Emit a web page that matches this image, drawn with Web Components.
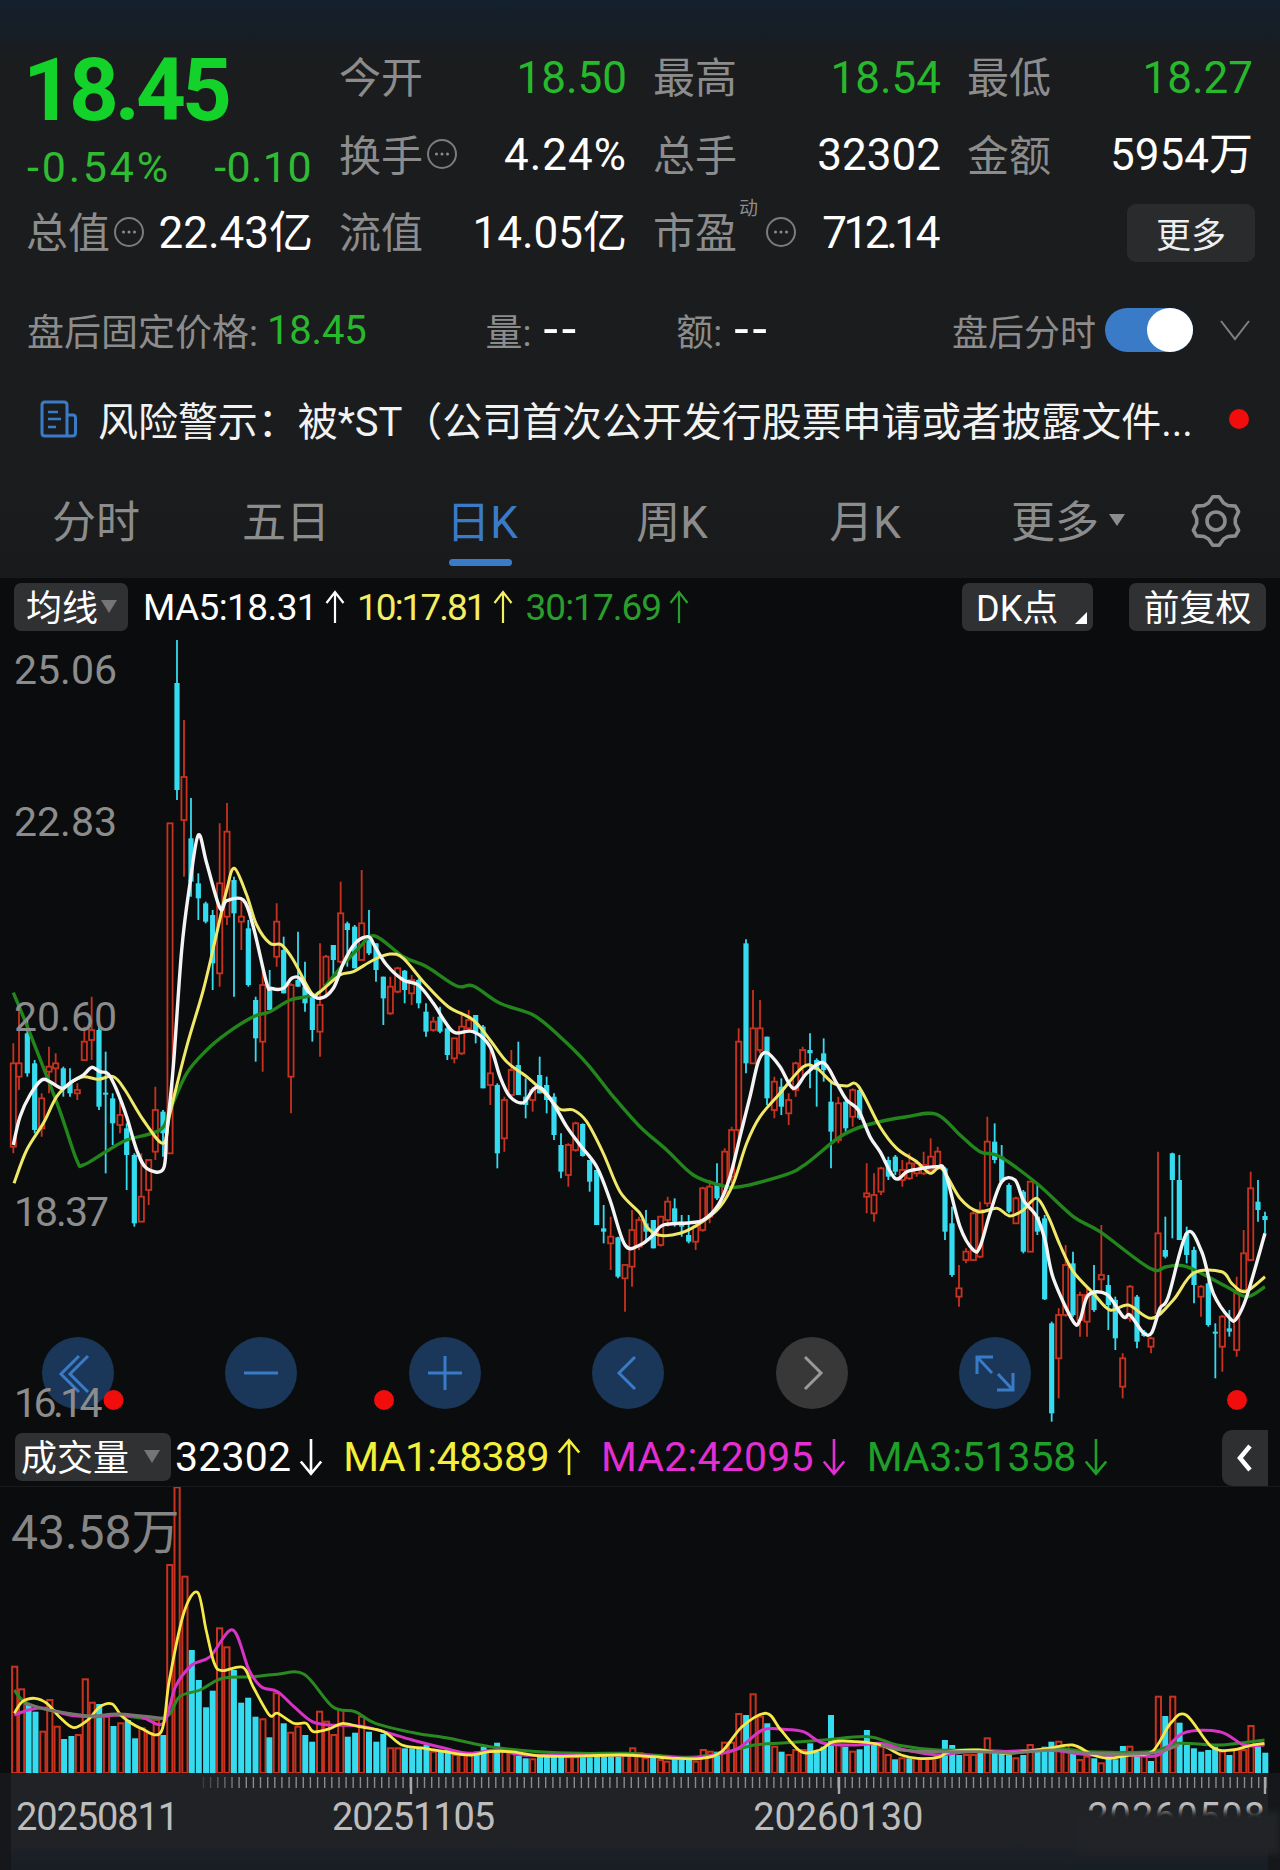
<!DOCTYPE html>
<html lang="zh">
<head>
<meta charset="utf-8">
<title>K线</title>
<style>
  html, body { margin: 0; padding: 0; background: #0b0c0d; }
  body {
    width: 1280px;
    height: 1870px;
    overflow: hidden;
    display: flex;
    flex-direction: column;
    font-family: Roboto, "Noto Sans CJK SC", sans-serif;
    color: #fff;
  }
</style>
</head>
<body>
  <quote-panel>
    <price-block slot="price" price="18.45" pct="-0.54%" diff="-0.10"></price-block>
    <stat-cell label="今开" value="18.50" tone="up"></stat-cell>
    <stat-cell label="最高" value="18.54" tone="up"></stat-cell>
    <stat-cell label="最低" value="18.27" tone="up"></stat-cell>
    <stat-cell label="换手" value="4.24%" info="true" spacing="1px"></stat-cell>
    <stat-cell label="总手" value="32302"></stat-cell>
    <stat-cell label="金额" value="5954万"></stat-cell>
    <stat-cell label="总值" value="22.43亿" info="true"></stat-cell>
    <stat-cell label="流值" value="14.05亿"></stat-cell>
    <stat-cell label="市盈" sup="动" value="712.14" info="true" spacing="-3.4px" nudge="2px"></stat-cell>
    <more-button>更多</more-button>
  </quote-panel>
  <after-hours></after-hours>
  <risk-notice>风险警示：被*ST（公司首次公开发行股票申请或者披露文件...</risk-notice>
  <period-tabs></period-tabs>
  <chart-toolbar height="58">
    <chart-chip mark="down" style="width:114px">均线</chart-chip>
    <ma-legend color="#ffffff" dir="up" spacing="-0.6px" style="margin-left:15px">MA5:18.31</ma-legend>
    <ma-legend color="#f3ee63" dir="up" spacing="-2px" style="margin-left:12px">10:17.81</ma-legend>
    <ma-legend color="#2a9e2c" dir="up" spacing="-1px" style="margin-left:13px">30:17.69</ma-legend>
    <chart-chip mark="corner" style="width:131px;margin-left:auto">DK点</chart-chip>
    <chart-chip style="width:137px;margin-left:36px;margin-right:14px">前复权</chart-chip>
  </chart-toolbar>
  <kline-chart></kline-chart>
  <chart-toolbar height="58" line="true">
    <chart-chip mark="down" wide="true" style="width:156px;margin-left:1px">成交量</chart-chip>
    <ma-legend color="#ffffff" dir="down" size="41" spacing="0.2px" big="true" style="margin-left:4px">32302</ma-legend>
    <ma-legend color="#f4ef3a" dir="up" size="41" spacing="-0.6px" big="true" style="margin-left:20px">MA1:48389</ma-legend>
    <ma-legend color="#e22fd2" dir="down" size="41" spacing="0.2px" big="true" style="margin-left:20px">MA2:42095</ma-legend>
    <ma-legend color="#1f9e2a" dir="down" size="41" spacing="-0.2px" big="true" style="margin-left:21px">MA3:51358</ma-legend>
    <back-tab style="margin-left:auto;margin-right:12px"></back-tab>
  </chart-toolbar>
  <volume-chart></volume-chart>
  <date-axis></date-axis>

<script>
const COLORS = { up: '#27b92c', blue: '#3a7bc8', gray: '#8c8c8c', red: '#c8321f', cyan: '#35dcef' };

class QuotePanel extends HTMLElement {
  constructor() {
    super();
    this.attachShadow({ mode: 'open' });
    this.shadowRoot.innerHTML = `
      <style>
        :host {
          display: block;
          height: 283px;
          box-sizing: border-box;
          padding: 39px 28px 0 27px;
          background: linear-gradient(#13202d 0, #1b1c1e 62px);
        }
        .grid {
          display: grid;
          grid-template-columns: 284px 285px 285px 283px;
          grid-auto-rows: 77.5px;
          column-gap: 29px;
          align-items: center;
        }
        ::slotted([slot=price]) { grid-row: span 2; align-self: start; }
      </style>
      <div class="grid"><slot name="price"></slot><slot id="rest"></slot></div>`;
    // stats fill the grid through display: contents of the default slot
    this.shadowRoot.querySelector('#rest').style.display = 'contents';
  }
}

class PriceBlock extends HTMLElement {
  constructor() {
    super();
    this.attachShadow({ mode: 'open' });
    this.shadowRoot.innerHTML = `
      <style>
        :host { display: block; color: #15d12a; }
        .price { font-size: 87px; font-weight: 700; line-height: 102px; letter-spacing: -4px; color: #13d229; margin-left: -4px; }
        .row { display: flex; justify-content: space-between; line-height: 53px; font-size: 43px; color: #2fbb33; }
        .pct { letter-spacing: 2.8px; }
        .diff { letter-spacing: 0.4px; margin-right: -1px; }
      </style>
      <div class="price">${this.getAttribute('price')}</div>
      <div class="row"><span class="pct">${this.getAttribute('pct')}</span><span class="diff">${this.getAttribute('diff')}</span></div>`;
  }
}

class StatCell extends HTMLElement {
  constructor() {
    super();
    this.attachShadow({ mode: 'open' });
    const tone = this.getAttribute('tone') === 'up' ? COLORS.up : '#fff';
    const sup = this.getAttribute('sup');
    const spacing = this.getAttribute('spacing') || '0';
    const nudge = this.getAttribute('nudge') || '-2px';
    this.shadowRoot.innerHTML = `
      <style>
        :host { display: flex; align-items: center; justify-content: space-between; height: 60px; }
        .label { display: flex; align-items: center; font-size: 42px; color: ${COLORS.gray}; position: relative; margin-top: -6px; margin-left: -1px; }
        .sup { position: absolute; left: 86px; top: -6px; font-size: 19px; }
        .value { font-size: 44px; line-height: 50px; color: ${tone}; letter-spacing: ${spacing}; margin-right: ${nudge}; }
        svg { margin-top: 4px; }
        .gap { margin-left: ${sup ? 28 : 3}px; }
      </style>
      <div class="label">${this.getAttribute('label')}${sup ? `<span class="sup">${sup}</span>` : ''}
        ${this.getAttribute('info') ? `<svg class="gap" width="32" height="32" viewBox="0 0 32 32"><circle cx="16" cy="16" r="14" fill="none" stroke="#7c7c7c" stroke-width="2"/><circle cx="10.5" cy="16" r="1.5" fill="#8c8c8c"/><circle cx="16" cy="16" r="1.5" fill="#8c8c8c"/><circle cx="21.5" cy="16" r="1.5" fill="#8c8c8c"/></svg>` : ''}
      </div>
      <div class="value">${this.getAttribute('value')}</div>`;
  }
}

class MoreButton extends HTMLElement {
  constructor() {
    super();
    this.attachShadow({ mode: 'open' });
    this.shadowRoot.innerHTML = `
      <style>
        :host {
          display: flex; align-items: center; justify-content: center;
          justify-self: end; margin-right: -4px;
          width: 128px; height: 58px; border-radius: 9px;
          background: #2a2b2d; font-size: 35px; color: #eee;
        }
      </style><slot></slot>`;
  }
}

class AfterHours extends HTMLElement {
  constructor() {
    super();
    this.attachShadow({ mode: 'open' });
    this.shadowRoot.innerHTML = `
      <style>
        :host {
          display: flex; align-items: center; height: 94px; box-sizing: border-box;
          padding: 0 30px 0 27px; background: #1b1c1e; font-size: 37px; color: ${COLORS.gray};
        }
        .val { font-size: 40px; color: ${COLORS.up}; margin-left: 9px; letter-spacing: -0.2px; }
        .dash { color: #fff; font-size: 52px; line-height: 40px; margin-left: 12px; letter-spacing: 4px; }
        .track { position: relative; width: 88px; height: 44px; border-radius: 22px; background: ${COLORS.blue}; margin-left: 9px; }
        .knob { position: absolute; right: 0; top: 0; width: 46px; height: 44px; border-radius: 50%; background: #fff; }
        svg { margin-left: 27px; }
      </style>
      <span>盘后固定价格:</span><span class="val">18.45</span>
      <span style="margin-left:119px">量:</span><span class="dash">--</span>
      <span style="margin-left:96px">额:</span><span class="dash">--</span>
      <span style="margin-left:auto;font-size:36px">盘后分时</span>
      <div class="track"><div class="knob"></div></div>
      <svg width="30" height="22" viewBox="0 0 30 22"><path d="M1 2 L15 20 L29 2" fill="none" stroke="#808080" stroke-width="2"/></svg>`;
  }
}

class RiskNotice extends HTMLElement {
  constructor() {
    super();
    this.attachShadow({ mode: 'open' });
    this.shadowRoot.innerHTML = `
      <style>
        :host {
          display: flex; align-items: center; height: 84px; box-sizing: border-box;
          padding: 0 31px 0 40px; background: #1b1c1e; font-size: 40px; color: #f2f2f2;
        }
        svg { flex: none; }
        .text { margin-left: 21px; white-space: nowrap; flex: 1; letter-spacing: -0.06px; }
        .dot { width: 20px; height: 20px; border-radius: 50%; background: #f20d0d; }
      </style>
      <svg width="37" height="38" viewBox="0 0 37 38" fill="none" stroke="${COLORS.blue}" stroke-width="3">
        <path d="M27 36 H5 Q2 36 2 33 V5 Q2 2 5 2 H24 Q27 2 27 5 V36 Q27 36 27 36"/>
        <path d="M27 15 H33 Q35.5 15 35.5 18 V33 Q35.5 36 32 36 H27"/>
        <path d="M8 12 H18 M8 19 H21 M8 27 H16" stroke-width="2.5"/>
      </svg>
      <div class="text"><slot></slot></div>
      <div class="dot"></div>`;
  }
}

class PeriodTabs extends HTMLElement {
  constructor() {
    super();
    this.attachShadow({ mode: 'open' });
    const tabs = [['分时', 192], ['五日', 188], ['日K', 204, true], ['周K', 176], ['月K', 210], ['更多', 196, false, true]];
    const pts = [];
    for (let i = 0; i < 24; i++) {
      const a = (i / 24) * Math.PI * 2 - Math.PI / 2 - Math.PI / 24;
      const r = [24.5, 24.5, 19.5, 19.5][i % 4];
      pts.push((26 + r * Math.cos(a)).toFixed(1) + ',' + (27 + r * Math.sin(a)).toFixed(1));
    }
    this.shadowRoot.innerHTML = `
      <style>
        :host {
          display: grid; grid-template-columns: ${tabs.map(t => t[1] + 'px').join(' ')} auto;
          height: 117px; background: linear-gradient(#1b1c1e, #191a1c);
          font-size: 44px; color: ${COLORS.gray}; position: relative;
        }
        .tab { position: relative; display: flex; align-items: center; justify-content: center; padding-bottom: 1px; }
        .on { color: ${COLORS.blue}; }
        .on::after {
          content: ''; position: absolute; left: 69px; bottom: 12px; width: 63px; height: 7px;
          border-radius: 4px; background: ${COLORS.blue};
        }
        .tri { width: 0; height: 0; margin: 2px 0 0 10px; border: 8px solid transparent; border-top: 12px solid ${COLORS.gray}; border-bottom: 0; }
        svg { margin: 33px 0 0 24px; }
      </style>
      ${tabs.map(t => `<div class="tab${t[2] ? ' on' : ''}">${t[0]}${t[3] ? '<span class="tri"></span>' : ''}</div>`).join('')}
      <svg width="52" height="54" viewBox="0 0 52 54" fill="none" stroke="#8c8c8c" stroke-width="3.6" stroke-linejoin="round">
        <polygon points="${pts.join(' ')}"/>
        <circle cx="26" cy="27" r="9"/>
      </svg>`;
  }
}

class ChartToolbar extends HTMLElement {
  constructor() {
    super();
    this.attachShadow({ mode: 'open' });
    this.shadowRoot.innerHTML = `
      <style>
        :host {
          display: flex; align-items: center; box-sizing: border-box;
          height: ${this.getAttribute('height')}px; padding-left: 14px; background: #0b0c0d;
          ${this.getAttribute('line') ? 'height: 59px; border-bottom: 1px solid #191a1b;' : ''}
        }
      </style><slot></slot>`;
  }
}

class ChartChip extends HTMLElement {
  constructor() {
    super();
    this.attachShadow({ mode: 'open' });
    const mark = this.getAttribute('mark');
    this.shadowRoot.innerHTML = `
      <style>
        :host {
          display: flex; align-items: center; justify-content: center; position: relative; box-sizing: border-box;
          height: 48px; padding-bottom: 4px; border-radius: 7px; background: #303133; font-size: 36px; color: #fff; flex: none;
          ${mark === 'down' ? 'justify-content: flex-start; padding-left: ' + (this.getAttribute('wide') ? 6 : 12) + 'px;' : ''}
          ${mark === 'corner' ? 'justify-content: flex-start; padding-left: 14px;' : ''}
        }
        .down { position: absolute; right: 11px; top: 17px; width: 0; height: 0; border: 8px solid transparent; border-top: 13px solid #757575; border-bottom: 0; }
        .corner { position: absolute; right: 6px; bottom: 7px; width: 0; height: 0; border-style: solid; border-width: 0 0 12px 12px; border-color: transparent transparent #fff transparent; }
      </style><slot></slot>${mark ? `<span class="${mark}"></span>` : ''}`;
  }
}

class MaLegend extends HTMLElement {
  constructor() {
    super();
    this.attachShadow({ mode: 'open' });
    const color = this.getAttribute('color');
    const up = this.getAttribute('dir') === 'up';
    const size = this.getAttribute('size') || 37;
    const big = this.getAttribute('big');
    this.shadowRoot.innerHTML = `
      <style>
        :host { display: flex; align-items: center; color: ${color}; font-size: ${size}px; letter-spacing: ${this.getAttribute('spacing') || 0}; white-space: nowrap; flex: none; }
        svg { margin-left: 8px; }
      </style>
      <slot></slot>
      <svg width="${big ? 24 : 20}" height="${big ? 38 : 34}" viewBox="0 0 20 34" preserveAspectRatio="none" fill="none" stroke="${color}" stroke-width="2.2">
        ${up ? '<path d="M10 33 V2 M1.5 13 L10 2 L18.5 13"/>' : '<path d="M10 1 V32 M1.5 21 L10 32 L18.5 21"/>'}
      </svg>`;
  }
}

class BackTab extends HTMLElement {
  constructor() {
    super();
    this.attachShadow({ mode: 'open' });
    this.shadowRoot.innerHTML = `
      <style>
        :host {
          display: flex; align-items: center; justify-content: center; flex: none; align-self: flex-start;
          width: 46px; height: 56px; margin-top: 2px; border-radius: 10px 0 0 10px; background: #2e2f31;
        }
      </style>
      <svg width="20" height="30" viewBox="0 0 20 30"><path d="M15 3 L5 15 L15 27" fill="none" stroke="#fff" stroke-width="4.5"/></svg>`;
  }
}

const catmull = (pts) => {
  let d = `M${pts[0][0].toFixed(1)} ${pts[0][1].toFixed(1)}`;
  for (let i = 0; i < pts.length - 1; i++) {
    const p0 = pts[i - 1] || pts[i], p1 = pts[i], p2 = pts[i + 1], p3 = pts[i + 2] || p2;
    const c1x = p1[0] + (p2[0] - p0[0]) / 6, c1y = p1[1] + (p2[1] - p0[1]) / 6;
    const c2x = p2[0] - (p3[0] - p1[0]) / 6, c2y = p2[1] - (p3[1] - p1[1]) / 6;
    d += `C${c1x.toFixed(1)} ${c1y.toFixed(1)} ${c2x.toFixed(1)} ${c2y.toFixed(1)} ${p2[0].toFixed(1)} ${p2[1].toFixed(1)}`;
  }
  return d;
};

// segs: [offsetX, offsetY, scaleX, scaleY, [x,y,x,y...]]
const toPoints = (segs) => {
  const out = [];
  segs.forEach(([ox, oy, sx, sy, list]) => {
    for (let i = 0; i < list.length; i += 2) out.push([ox + list[i] / sx, oy + list[i + 1] / sy]);
  });
  return out;
};

// candles are read off per picture region: [red?, x, wickTop, wickBottom, bodyTop, bodyBottom]
const CANDLES = [
  [0, 800, [[1,40,730,1060,790,1040],[1,57,620,870,790,830],[0,82,660,830,700,820],[0,104,780,1000,790,990],[1,125,880,1010,895,985],[1,147,740,880,800,815],[1,167,760,860,790,805],[0,190,800,890,805,860],[0,210,805,890,850,880],[1,232,850,900,870,880],[1,253,680,780,725,780],[1,275,590,780,690,720],[0,297,680,930,690,920],[0,317,755,1120,878,882],[0,338,880,1035,895,970],[1,360,905,1000,945,975],[0,380,970,1170,985,1065],[0,403,1060,1280,1065,1270],[1,424,1060,1265,1190,1265],[1,446,1080,1215,1080,1170],[1,466,860,1080,930,1055],[0,489,930,1070,935,1000],[1,510,70,1060,70,1060],[0,531,-480,0,-351,-30],[1,552,-240,230,-69,60],[0,573,-6,290,115,245],[0,595,220,360,250,295],[0,617,305,370,310,365],[0,638,330,570,345,490],[1,659,70,560,250,520],[1,681,9,375,95,350],[0,702,230,590,240,340],[1,724,300,450,350,365],[0,745,360,560,385,555],[0,767,590,785,600,715],[1,788,510,815,555,725],[0,809,510,630,570,630],[1,830,310,500,365,470],[0,851,410,580,450,580],[1,873,550,940,555,830],[0,894,395,560,540,560],[0,915,485,635,560,610],[0,937,590,725,590,690]]],
  [320, 900, [[1,0,130,470,315,395],[1,18,165,295,170,255],[0,40,135,240,135,180],[1,62,-55,190,40,185],[0,82,65,200,70,90],[0,104,75,205,80,205],[1,125,-90,180,70,180],[0,147,30,165,120,160],[0,168,130,245,130,210],[0,190,230,375,230,295],[1,211,230,345,260,340],[1,233,200,280,205,275],[0,254,210,310,212,270],[1,275,225,315,240,280],[0,296,235,325,240,310],[0,318,310,410,335,395],[1,340,350,395,365,390],[0,360,320,400,350,395],[0,382,375,480,385,465],[1,403,415,490,415,475],[1,425,335,465,380,460],[1,446,330,395,360,385],[0,467,345,430,345,400],[0,489,375,565,380,565],[1,511,450,615,520,555],[0,532,550,805,555,760],[1,553,590,755,600,715],[1,574,450,590,510,585],[0,595,425,585,495,585],[0,617,535,655,590,615],[1,638,560,635,570,600],[0,659,470,580,525,580],[0,680,530,640,555,600],[0,702,580,720,590,705],[0,723,700,835,735,815],[1,745,730,860,735,825],[1,767,665,755,670,750],[0,788,670,770,672,768],[0,809,780,875,780,845],[0,830,810,975,810,975],[0,851,915,1030,985,995],[1,872,950,1110,1010,1030],[0,894,1010,1135,1012,1130],[1,915,1095,1235,1095,1135],[1,936,930,1160,990,1100],[1,957,950,1050,960,1040]]],
  [640, 930, [[0,18,840,930,880,905],[0,40,870,955,870,955],[1,62,860,950,860,945],[1,83,800,890,815,870],[0,104,805,890,835,875],[0,125,855,920,880,890],[0,146,855,940,915,935],[1,167,890,960,890,935],[1,188,770,905,775,900],[1,209,750,880,770,860],[0,231,700,810,760,805],[1,254,655,800,665,790],[1,275,590,760,600,740],[1,296,295,650,335,600],[0,318,28,430,40,400],[1,339,180,400,295,400],[1,360,210,370,295,360],[0,381,320,525,320,505],[1,403,440,565,455,540],[0,424,445,555,470,530],[1,446,490,585,510,550],[1,467,395,500,400,480],[1,488,350,440,360,410],[0,510,310,475,360,370],[0,530,385,530,390,420],[0,551,325,455,370,420],[0,573,455,715,515,605],[1,595,500,640,520,630],[0,617,510,605,515,595],[1,638,475,590,480,560],[0,659,470,570,480,565],[1,680,700,850,790,800],[1,702,730,875,795,850],[1,723,710,795,715,785],[0,745,680,750,690,740],[0,766,675,735,680,725],[1,787,690,770,720,750],[1,808,670,750,700,745],[1,830,690,740,700,730],[1,851,665,735,705,730],[1,872,625,720,680,720],[1,893,650,720,665,715],[0,915,710,930,715,905],[0,936,830,1040,880,1035],[1,957,1005,1130,1075,1100]]],
  [960, 1000, [[1,18,745,790,755,780],[1,40,630,780,640,780],[1,60,605,775,630,770],[1,82,350,620,425,610],[0,104,370,490,425,480],[0,125,435,550,470,545],[0,147,550,640,555,635],[1,168,590,670,595,670],[0,190,570,760,575,755],[1,211,545,755,545,755],[0,232,550,705,650,695],[0,254,645,900,655,898],[0,275,965,1265,970,1240],[1,296,925,1195,945,1075],[1,317,735,950,795,945],[0,339,755,950,790,945],[1,360,875,1010,885,960],[1,381,860,1010,885,965],[0,402,795,935,880,930],[1,424,675,880,825,838],[0,445,825,990,855,915],[0,466,890,1050,900,1015],[1,488,1060,1195,1075,1160],[1,510,855,965,860,955],[0,531,885,1045,890,1025],[0,552,990,1010,995,1008],[1,573,1010,1060,1015,1040],[1,594,455,950,700,940],[0,616,650,775,750,770],[0,637,458,715,460,540],[0,658,465,720,540,720],[0,680,680,790,700,765],[0,702,740,910,750,855],[1,723,855,950,860,890],[0,745,830,980,850,975],[0,766,970,1135,995,1000],[1,787,945,1115,950,1040],[0,808,930,1010,985,995],[1,830,830,1070,880,1050],[1,851,690,880,760,870],[1,872,515,780,565,780],[0,894,540,665,605,630],[0,915,635,700,648,660]]]
];

const MA_LINES = [
  ['#22861c', 3.4, [
    [0,800,3,3,[40,578,90,700,175,920,230,1080,250,1095,310,1060,380,1020,480,990,510,930,560,820,620,750,680,700,760,650,810,635,870,600,920,590]],
    [320,900,3,3,[0,275,60,205,120,140,165,108,250,170,320,200,410,258,460,258,540,310,640,345,720,410,800,490,880,590]],
    [640,930,3,3,[0,590,80,660,160,735,240,765,300,770,440,733,500,700,600,620,680,585,800,560,890,553]],
    [960,1000,3,3,[0,405,60,455,120,470,230,550,340,650,420,695,570,805,620,800,680,800,800,860,860,890,915,860]]
  ]],
  ['#f0e868', 3, [
    [0,800,3,3,[42,1150,80,1050,130,970,170,890,210,850,250,830,295,838,340,830,375,870,430,960,490,1030,510,940,560,740,610,570,650,400,680,270,703,205,740,285,770,375,810,430,845,435,880,480,935,580]],
    [320,900,3,3,[0,275,60,225,100,215,160,180,210,162,250,175,310,245,385,320,460,360,510,420,560,485,620,530,680,585,720,628,760,630,800,665,850,760,900,875]],
    [640,930,3,3,[0,850,20,890,55,915,120,910,180,880,240,830,280,760,320,640,360,560,420,490,490,410,530,415,580,460,620,468,655,468,720,590,770,655,830,695,870,730,905,715]],
    [960,1000,3,3,[0,595,55,635,110,625,150,648,190,630,230,595,265,650,300,735,340,815,400,880,450,930,505,915,575,955,640,900,700,820,785,815,815,850,855,875,915,830]]
  ]],
  ['#f4f4f4', 3.4, [
    [0,800,3,3,[40,1035,60,950,90,885,125,840,150,845,185,865,215,845,250,825,275,802,300,815,325,822,350,870,380,950,410,1050,440,1105,490,1107,500,1000,520,800,545,450,570,250,595,105,620,190,660,325,680,302,730,300,760,380,800,550,815,565,850,565,875,535,900,535,925,575]],
    [320,900,3,3,[0,295,40,265,70,190,105,130,145,110,165,140,200,195,250,240,295,255,340,310,375,365,405,398,460,395,510,440,540,530,570,590,610,608,640,568,665,565,700,610,740,680,780,735,830,800,870,900,915,1035]],
    [640,930,3,3,[0,945,40,915,70,885,150,878,190,870,235,825,270,740,300,620,330,500,355,395,380,368,420,410,460,475,500,430,550,398,590,460,620,510,655,540,690,620,720,665,765,745,800,725,830,718,890,710,915,725]],
    [960,1000,3,3,[0,680,40,750,60,740,90,640,125,545,165,540,190,600,230,650,255,720,280,835,340,965,360,960,385,885,440,883,490,950,510,945,550,998,575,998,600,925,625,890,680,700,725,755,760,880,810,955,830,955,860,890,915,700]]
  ]]
];

class ZoomButton extends HTMLElement {
  constructor() {
    super();
    this.attachShadow({ mode: 'open' });
    const muted = this.getAttribute('muted');
    const icons = {
      first: '<path d="M37 19 L19 37 L37 55 M46 19 L28 37 L46 55"/>',
      minus: '<path d="M19 36 H53"/>',
      plus: '<path d="M19 36 H53 M36 19 V53"/>',
      prev: '<path d="M43 20 L27 36 L43 52"/>',
      next: '<path d="M29 20 L45 36 L29 52"/>',
      expand: '<path d="M18 37 V20 H34 M19 21 L33 36 M54 36 V53 H38 M53 52 L39 37"/>'
    };
    this.shadowRoot.innerHTML = `
      <style>
        :host { display: block; flex: none; width: 72px; height: 72px; border-radius: 50%; background: ${muted ? '#383838' : '#1a3658'}; }
        svg { display: block; }
      </style>
      <svg width="72" height="72" viewBox="0 0 72 72" fill="none" stroke="${muted ? '#9a9a9a' : COLORS.blue}" stroke-width="3">${icons[this.getAttribute('icon')]}</svg>`;
  }
}

class KlineChart extends HTMLElement {
  constructor() {
    super();
    this.attachShadow({ mode: 'open' });
    const body = [];
    CANDLES.forEach(([ox, oy, list]) => {
      list.forEach(([red, zx, wt, wb, bt, bb]) => {
        const x = ox + zx / 3, y = (v) => oy + v / 3;
        const top = y(wt), bot = y(wb), bTop = y(bt), bBot = Math.max(y(bb), y(bt) + 2);
        if (red) {
          body.push(`<path d="M${x} ${top}V${bTop}M${x} ${bBot}V${bot}" stroke="${COLORS.red}" stroke-width="1.8"/>`);
          body.push(`<rect x="${x - 2.6}" y="${bTop}" width="5.2" height="${bBot - bTop}" fill="#0b0c0d" stroke="${COLORS.red}" stroke-width="1.8"/>`);
        } else {
          body.push(`<path d="M${x} ${top}V${bot}" stroke="${COLORS.cyan}" stroke-width="1.8"/>`);
          body.push(`<rect x="${x - 2.6}" y="${bTop}" width="5.2" height="${bBot - bTop}" fill="${COLORS.cyan}"/>`);
        }
      });
    });
    const lines = MA_LINES.map(([color, w, segs]) =>
      `<path d="${catmull(toPoints(segs))}" fill="none" stroke="${color}" stroke-width="${w}" stroke-linejoin="round"/>`).join('');
    const labels = [['25.06', 670, 0], ['22.83', 822, 0], ['20.60', 1017, 0], ['18.37', 1212, -2], ['16.14', 1403, -3.6]];
    this.shadowRoot.innerHTML = `
      <style>
        :host { display: block; position: relative; height: 792px; background: #0b0c0d; overflow: hidden; }
        svg.plot { display: block; position: absolute; left: 0; top: 0; }
        .tick { position: absolute; left: 14px; font-size: 41px; line-height: 40px; color: ${COLORS.gray}; }
        .zoombar { position: absolute; left: 42px; top: 701px; display: flex; gap: 111.4px; }
        .dots { position: absolute; left: 0; top: 0; pointer-events: none; }
      </style>
      <svg class="plot" width="1280" height="792" viewBox="0 636 1280 792">${body.join('')}${lines}</svg>
      <div class="zoombar">
        <zoom-button icon="first"></zoom-button>
        <zoom-button icon="minus"></zoom-button>
        <zoom-button icon="plus"></zoom-button>
        <zoom-button icon="prev"></zoom-button>
        <zoom-button icon="next" muted="true"></zoom-button>
        <zoom-button icon="expand"></zoom-button>
      </div>
      ${labels.map(([t, y, ls]) => `<div class="tick" style="top:${y - 20 - 636}px;letter-spacing:${ls}px">${t}</div>`).join('')}
      <svg class="dots" width="1280" height="792" viewBox="0 636 1280 792">
        <circle cx="113.5" cy="1400" r="10" fill="#f20d0d"/>
        <circle cx="384" cy="1400" r="10" fill="#f20d0d"/>
        <circle cx="1237" cy="1400" r="10" fill="#f20d0d"/>
      </svg>`;
  }
}

// volume bars: [red?, x in crop, top in crop]
const BARS_LEFT = [[1,36,710],[1,53,778],[0,70,825],[0,87,845],[1,105,905],[1,122,810],[1,140,890],[0,157,927],[0,175,918],[1,192,915],[1,209,748],[1,226,818],[0,243,822],[1,261,860],[0,278,888],[1,296,880],[0,313,870],[0,331,925],[1,348,895],[1,366,910],[1,383,870],[0,400,915],[1,416,405],[1,434,172],[1,453,440],[0,470,660],[0,487,750],[0,505,832],[0,521,782],[1,538,595],[1,556,652],[0,573,720],[0,591,818],[0,608,803],[0,626,860],[1,644,868],[0,660,922],[1,677,790],[0,695,880],[1,712,908],[1,730,890],[0,748,915],[0,765,935],[1,783,845],[1,800,875],[1,818,915],[1,835,840],[0,852,920],[0,870,908],[1,886,860],[0,904,905],[0,922,935],[0,939,912],[1,957,955],[1,975,955],[0,992,955],[0,1010,955],[0,1027,955],[0,1045,945],[1,1062,965],[0,1080,965],[0,1097,960],[1,1115,975],[1,1132,975],[1,1150,975],[0,1168,965],[0,1185,950],[1,1202,960],[0,1218,938],[1,1237,965],[1,1254,965],[0,1271,978],[0,1288,985],[1,1305,988],[0,1323,975],[0,1340,975],[0,1357,975],[0,1375,975],[1,1393,982],[1,1410,982],[0,1428,982],[0,1445,982],[0,1463,980],[0,1480,980],[0,1497,980],[0,1515,980],[1,1533,970],[1,1550,955],[1,1568,970]];
const BARS_RIGHT = [[1,14,985],[0,32,983],[1,50,990],[1,66,995],[0,85,988],[0,102,988],[0,120,988],[1,137,995],[1,155,960],[1,172,965],[0,189,965],[1,207,938],[1,224,938],[1,242,852],[0,260,855],[1,277,793],[1,295,860],[0,312,880],[1,330,950],[0,347,965],[1,365,975],[1,382,960],[1,400,960],[0,417,940],[0,433,965],[0,450,950],[0,468,855],[1,487,945],[0,503,950],[1,521,965],[0,538,958],[0,556,900],[0,573,945],[1,590,950],[1,608,975],[0,625,988],[1,642,985],[0,660,985],[1,677,985],[1,695,985],[1,712,985],[1,730,975],[0,747,930],[0,765,945],[0,782,975],[1,800,975],[1,817,975],[0,834,965],[1,851,925],[0,869,965],[0,886,970],[0,904,975],[1,921,985],[0,939,975],[1,956,945],[0,974,965],[0,991,950],[0,1008,935],[1,1026,935],[1,1044,945],[0,1061,970],[1,1078,990],[1,1095,980],[0,1113,985],[1,1130,1000],[0,1148,975],[0,1165,988],[0,1183,948],[1,1200,950],[0,1218,975],[1,1235,970],[0,1252,993],[1,1270,800],[0,1287,858],[1,1305,800],[0,1322,878],[0,1340,945],[0,1357,955],[0,1375,965],[0,1392,960],[0,1409,950],[1,1427,965],[0,1444,975],[1,1462,960],[1,1479,960],[1,1497,888],[0,1514,950],[0,1532,968]];

const VOL_LINES = [
  ['#2a8a22', 3, [
    [0,1430,2.45,3,[35,780,60,815,120,840,220,860,280,855,400,865,440,800,490,780,545,745,620,740,680,733,745,733,815,830,870,845,920,880,1020,910,1100,925,1200,950,1320,965,1420,970,1530,970]],
    [640,1430,2.45,3,[30,975,120,982,200,970,280,945,340,940,450,930,560,920,630,945,730,960,830,960,920,965,1020,955,1100,965,1250,965,1320,940,1420,945,1530,930]]
  ]],
  ['#d733c4', 3, [
    [0,1430,2.45,3,[35,855,70,840,110,835,170,855,230,860,290,855,345,860,400,880,430,770,470,705,515,680,570,600,610,720,640,770,680,785,720,830,765,875,810,885,880,888,940,905,1010,930,1090,955,1150,970,1220,960,1280,975,1420,975,1520,975]],
    [640,1430,2.45,3,[30,978,120,985,180,975,240,955,300,900,350,898,400,905,450,940,530,945,590,940,650,960,730,975,800,965,880,965,1000,960,1100,975,1200,975,1270,975,1330,910,1420,905,1480,945,1530,945]]
  ]],
  ['#f5e84a', 2.8, [
    [0,1430,2.45,3,[35,850,55,815,85,805,115,820,145,860,180,893,215,870,245,830,275,822,300,860,345,895,395,905,415,750,450,550,484,487,505,600,525,700,545,722,595,712,620,770,660,855,680,850,720,880,750,880,768,905,810,895,840,880,880,890,940,905,985,945,1040,955,1090,965,1150,975,1200,965,1250,965,1330,978,1420,978,1520,975]],
    [640,1430,2.45,3,[30,980,80,985,150,985,200,965,250,890,310,850,345,900,395,965,440,960,475,935,530,935,590,945,640,975,680,985,730,982,760,965,830,960,900,970,1000,955,1060,945,1110,975,1150,985,1200,975,1255,965,1300,880,1338,855,1400,950,1450,960,1500,945,1530,940]]
  ]],
  ['#77776f', 3, [
    [0,1430,2.45,3,[60,820,120,840,220,858,290,852,400,865]]
  ]],
  ['#7b7a70', 3, [
    [640,1430,2.45,3,[590,945,640,960,730,965,830,965,920,968,1020,960,1100,970,1250,970,1320,945]]
  ]]
];

class VolumeChart extends HTMLElement {
  constructor() {
    super();
    this.attachShadow({ mode: 'open' });
    const base = 1773;
    const bar = (ox) => ([red, zx, zy]) => {
      const x = ox + zx / 2.45, y = 1430 + zy / 3;
      return red
        ? `<rect x="${(x - 2.6).toFixed(1)}" y="${y.toFixed(1)}" width="5.2" height="${(base - y).toFixed(1)}" fill="none" stroke="${COLORS.red}" stroke-width="2"/>`
        : `<rect x="${(x - 3).toFixed(1)}" y="${y.toFixed(1)}" width="6" height="${(base - y).toFixed(1)}" fill="${COLORS.cyan}"/>`;
    };
    const bars = BARS_LEFT.map(bar(0)).join('') + BARS_RIGHT.map(bar(640)).join('');
    const lines = VOL_LINES.map(([color, w, segs]) =>
      `<path d="${catmull(toPoints(segs))}" fill="none" stroke="${color}" stroke-width="${w}" stroke-linejoin="round"/>`).join('');
    this.shadowRoot.innerHTML = `
      <style>
        :host { display: block; position: relative; height: 286px; background: #0b0c0d; overflow: hidden; }
        svg { display: block; position: absolute; left: 0; top: 0; }
        .max { position: absolute; left: 11px; top: 21px; font-size: 48px; line-height: 50px; color: #858585; }
      </style>
      <svg width="1280" height="286" viewBox="0 1487 1280 286">${bars}${lines}</svg>
      <div class="max">43.58万</div>`;
  }
}

class DateAxis extends HTMLElement {
  constructor() {
    super();
    this.attachShadow({ mode: 'open' });
    let ticks = '';
    for (let x = 203.5; x < 1268; x += 7.13) {
      const op = x < 240 ? 0.25 + (x - 203) / 50 : 1;
      ticks += `<path d="M${x.toFixed(1)} 4V15" stroke="#8a8a8a" stroke-width="1.4" opacity="${op.toFixed(2)}"/>`;
    }
    const majors = [411, 839, 1265].map(x => `<path d="M${x} 4V21" stroke="#a8a8a8" stroke-width="2.4"/>`).join('');
    this.shadowRoot.innerHTML = `
      <style>
        :host {
          display: flex; position: relative; height: 97px; box-sizing: border-box;
          background: linear-gradient(#212225 0, #202226 70%, #171e26 100%);
          font-size: 38px; line-height: 44px; color: #bdbdbd; letter-spacing: -1.1px;
        }
        svg { position: absolute; left: 0; top: 0; }
        .labels { display: flex; width: 100%; padding: 22px 0 0 16px; box-sizing: border-box; }
        .fade { position: absolute; left: 1074px; top: 38px; width: 206px; height: 44px; background: #212327; filter: blur(3px); }
        .edge { position: absolute; top: 0; bottom: 0; width: 11px; background: #15171a; }
      </style>
      <div class="edge" style="left:0"></div>
      <div class="edge" style="right:0;width:12px"></div>
      <svg width="1280" height="30" viewBox="0 0 1280 30">${ticks}${majors}</svg>
      <div class="labels">
        <span>20250811</span>
        <span style="margin-left:154px">20251105</span>
        <span style="margin-left:259px;letter-spacing:-0.1px">20260130</span>
        <span style="margin-left:164px;letter-spacing:1px">20260508</span>
      </div>
      <div class="fade"></div>`;
  }
}

customElements.define('quote-panel', QuotePanel);
customElements.define('price-block', PriceBlock);
customElements.define('stat-cell', StatCell);
customElements.define('more-button', MoreButton);
customElements.define('after-hours', AfterHours);
customElements.define('risk-notice', RiskNotice);
customElements.define('period-tabs', PeriodTabs);
customElements.define('chart-toolbar', ChartToolbar);
customElements.define('chart-chip', ChartChip);
customElements.define('ma-legend', MaLegend);
customElements.define('back-tab', BackTab);
customElements.define('zoom-button', ZoomButton);
customElements.define('kline-chart', KlineChart);
customElements.define('volume-chart', VolumeChart);
customElements.define('date-axis', DateAxis);
</script>
</body>
</html>
